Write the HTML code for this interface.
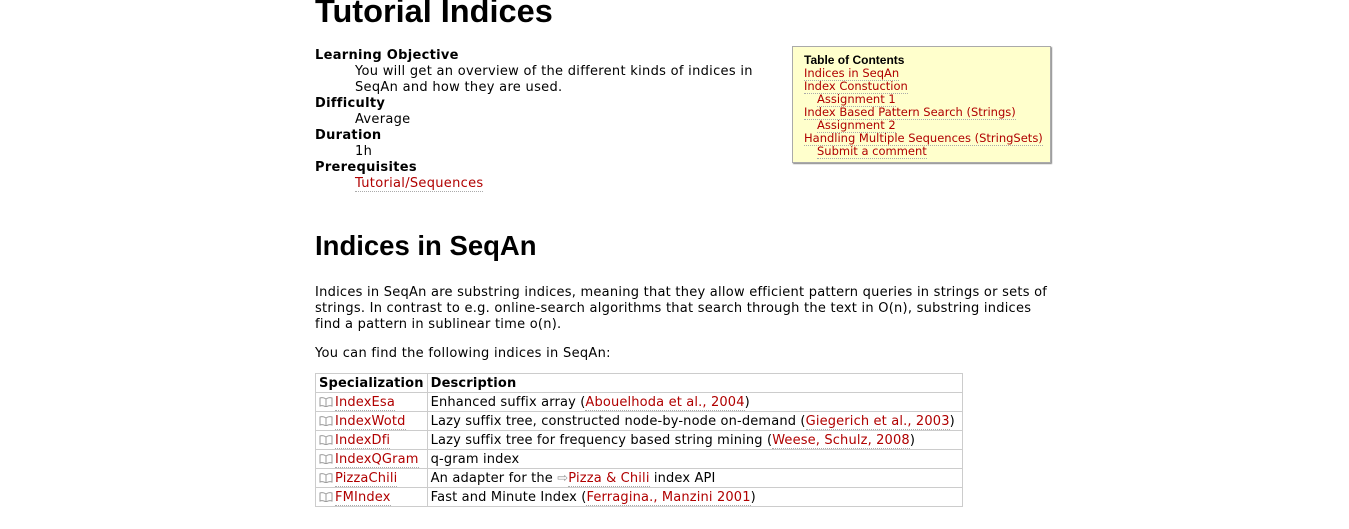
<!DOCTYPE html>
<html><head><style>
body{margin:0;width:1349px;height:529px;overflow:hidden;background:#fff;font-family:"DejaVu Sans",Verdana,sans-serif;font-size:13px;color:#000;position:relative}
a{color:#b00000;text-decoration:none;border-bottom:1px dotted #aaa}
.abs{position:absolute}
.m{letter-spacing:0.3px}
h1,h2{font-family:"Liberation Sans",Arial,sans-serif;font-weight:bold;margin:0;position:absolute;left:315px}
dl{margin:0}
dt{font-weight:bold;line-height:16px}
dd{margin:0 0 0 40px;line-height:16px}
p{margin:0;line-height:16px}
table{border-collapse:collapse;position:absolute;left:315px;top:373px;width:648px;letter-spacing:0.15px}
td,th{border:1px solid #ccc;height:18px;padding:2px 3px 0;line-height:16px;text-align:left;white-space:nowrap;box-sizing:border-box}
tr{height:19px}
th{font-weight:bold}
.bk{display:inline-block;width:14px;height:10px;margin-right:2px;vertical-align:-1px}
.toc{position:absolute;left:792px;top:46px;width:246px;height:108px;background:#ffffcc;border:1px solid #aaa;padding:7px 0 0 11px;font-size:11.5px;line-height:13px;box-shadow:1px 1px 1px #888}
.toc div{white-space:nowrap}
.toc .s{padding-left:13px}
</style></head><body>
<h1 style="top:-7px;font-size:32.5px">Tutorial Indices</h1>
<dl class="abs m" style="left:315px;top:48px;width:460px">
<dt>Learning Objective</dt>
<dd>You will get an overview of the different kinds of indices in SeqAn and how they are used.</dd>
<dt>Difficulty</dt><dd>Average</dd>
<dt>Duration</dt><dd>1h</dd>
<dt>Prerequisites</dt><dd><a>Tutorial/Sequences</a></dd>
</dl>
<div class="toc">
<div style="font-family:'Liberation Sans',Arial,sans-serif;font-weight:bold;font-size:12px">Table of Contents</div>
<div><a>Indices in SeqAn</a></div>
<div><a>Index Constuction</a></div>
<div class="s"><a>Assignment 1</a></div>
<div><a>Index Based Pattern Search (Strings)</a></div>
<div class="s"><a>Assignment 2</a></div>
<div><a>Handling Multiple Sequences (StringSets)</a></div>
<div class="s"><a>Submit a comment</a></div>
</div>
<h2 style="top:230px;font-size:27.5px">Indices in SeqAn</h2>
<p class="abs" style="left:315px;top:285px;width:740px;letter-spacing:0.25px">Indices in SeqAn are substring indices, meaning that they allow efficient pattern queries in strings or sets of strings. In contrast to e.g. online-search algorithms that search through the text in O(n), substring indices find a pattern in sublinear time o(n).</p>
<p class="abs m" style="left:315px;top:346px">You can find the following indices in SeqAn:</p>
<svg width="0" height="0" style="position:absolute"><defs><g id="b"><path d="M7 2 Q4 0 1 1 V9 Q4 8 7 10 Q10 8 13 9 V1 Q10 0 7 2 V10" fill="none" stroke="#999" stroke-width="1"/></g></defs></svg>
<table>
<tr><th style="width:110px">Specialization</th><th>Description</th></tr>
<tr><td><svg class="bk"><use href="#b"/></svg><a>IndexEsa</a></td><td>Enhanced suffix array (<a>Abouelhoda et al., 2004</a>)</td></tr>
<tr><td><svg class="bk"><use href="#b"/></svg><a>IndexWotd</a></td><td>Lazy suffix tree, constructed node-by-node on-demand (<a>Giegerich et al., 2003</a>)</td></tr>
<tr><td><svg class="bk"><use href="#b"/></svg><a>IndexDfi</a></td><td>Lazy suffix tree for frequency based string mining (<a>Weese, Schulz, 2008</a>)</td></tr>
<tr><td><svg class="bk"><use href="#b"/></svg><a>IndexQGram</a></td><td>q-gram index</td></tr>
<tr><td><svg class="bk"><use href="#b"/></svg><a>PizzaChili</a></td><td>An adapter for the <span style="color:#999">&#x21E8;</span><a>Pizza &amp; Chili</a> index API</td></tr>
<tr><td><svg class="bk"><use href="#b"/></svg><a>FMIndex</a></td><td>Fast and Minute Index (<a>Ferragina., Manzini 2001</a>)</td></tr>
</table>
</body></html>
